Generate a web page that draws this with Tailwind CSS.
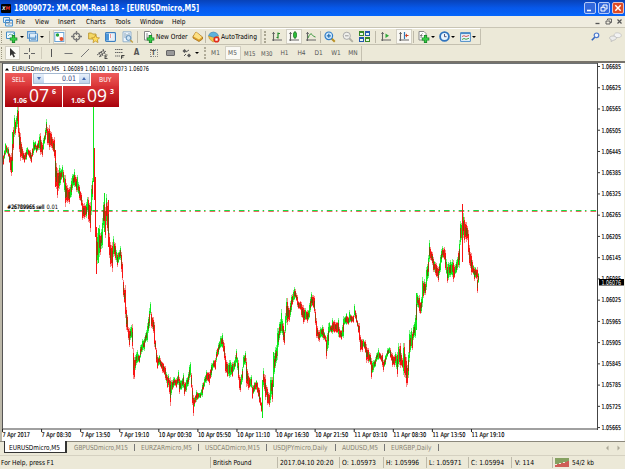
<!DOCTYPE html>
<html lang="en"><head><meta charset="utf-8"><title>EURUSDmicro,M5</title>
<script src="https://cdn.jsdelivr.net/npm/@tailwindcss/browser@4"></script></head>
<body class="w-[625px] h-[469px] overflow-hidden bg-[#ece9d8] font-['DejaVu_Sans_Condensed','DejaVu_Sans',sans-serif] text-[7px] text-black leading-none whitespace-nowrap">
<div class="relative flex flex-col w-[625px] h-[469px]">
<header class="h-4 shrink-0 flex items-center bg-linear-to-b from-[#0842b8] via-[#0758ea] to-[#0566fb] text-white pr-px">
  <div class="w-[10px] h-[9px] ml-px bg-black rounded-[1px] text-[5px] font-bold italic flex items-center justify-center"><span class="text-[#eee]">X</span><span class="text-[#e33]">M</span></div>
  <h1 class="ml-[3px] text-[9.5px] font-bold" data-w="185">18009072: XM.COM-Real 18 - [EURUSDmicro,M5]</h1>
  <div class="ml-auto flex gap-[2px]">
    <svg class="w-3 h-3" viewBox="0 0 12 12"><rect x=".5" y=".5" width="11" height="11" rx="1.5" fill="#3268dc" stroke="#dce6ff" stroke-width=".8"/><path d="M3 8.5h4" stroke="#fff" stroke-width="1.6"/></svg>
    <svg class="w-3 h-3" viewBox="0 0 12 12"><rect x=".5" y=".5" width="11" height="11" rx="1.5" fill="#3268dc" stroke="#dce6ff" stroke-width=".8"/><path d="M5 5V3h4v4H7.500M3 5.300h4v3.700H3z" stroke="#fff" fill="none"/></svg>
    <svg class="w-3 h-3" viewBox="0 0 12 12"><rect x=".5" y=".5" width="11" height="11" rx="1.500" fill="#dc4a25" stroke="#ffe0d8" stroke-width=".8"/><path d="M3.300 3.300l5.400 5.400M8.700 3.300l-5.400 5.400" stroke="#fff" stroke-width="1.500"/></svg>
  </div>
</header>
<nav class="h-3 shrink-0 flex items-center bg-[#efecdf] border-b border-[#c9c5b5]">
  <svg class="w-[10px] h-[10px] ml-[3px] mr-[3px] shrink-0" viewBox="0 0 10 10"><path d="M.5.5h6v5h-6zM2.500 3h7v6h-7z" fill="#dff0fc" stroke="#4d94cf"/><path d="M3 3.300h6" stroke="#3d84d0"/><path d="M4 7V5.500M6 8V5M8 7V5" stroke="#777" stroke-width=".8"/></svg>
  <div class="w-[19px]"><span data-w="9">File</span></div><div class="w-[23px]"><span data-w="14">View</span></div><div class="w-[28px]"><span data-w="17.500">Insert</span></div><div class="w-[29px]"><span data-w="19.500">Charts</span></div><div class="w-[25px]"><span data-w="15.500">Tools</span></div><div class="w-[32px]"><span data-w="23.500">Window</span></div><div><span data-w="13.500">Help</span></div>
  <div class="ml-auto mr-[2px] flex gap-[4px] text-[#555]">
    <svg class="w-[7px] h-[7px]" viewBox="0 0 7 7"><path d="M1.500 5.500h4" stroke="#555" stroke-width="1.300"/></svg>
    <svg class="w-[7px] h-[7px]" viewBox="0 0 7 7"><path d="M2.500 2V1h4v3.500H5M1 3h4v3H1z" stroke="#555" fill="none" stroke-width=".9"/></svg>
    <svg class="w-[7px] h-[7px]" viewBox="0 0 7 7"><path d="M1.500 1.500l4 4M5.500 1.500l-4 4" stroke="#555" stroke-width="1.200"/></svg>
  </div>
</nav>
<section class="h-[17px] shrink-0 flex items-center">
  <div class="w-[481px] h-[17px] flex items-center border-b border-r border-[#c4c0b0] border-t border-t-white pl-px *:shrink-0">
    <i class="w-[3px] h-3 border-l border-dotted border-[#999580]"></i>
    <div class="w-[15px]"><svg class="ml-[2px] w-3 h-3" viewBox="0 0 12 12"><path d="M.5 1h8v6.500h-8z" fill="#eef7ff" stroke="#428bc6"/><path d="M2 5l2-2 2 1 2-2" fill="none" stroke="#5a9" stroke-width=".8"/><path d="M7.500 4v8M3.800 8h7.500" stroke="#168225" stroke-width="3.200"/><path d="M7.500 4.700v6.600M4.500 8h6" stroke="#35c946" stroke-width="1.800"/></svg></div>
    <div class="w-[8px]"><svg class="w-[4px] h-[2px] ml-px" viewBox="0 0 4 2"><path d="M0 0h4L2 2z"/></svg></div>
    <div class="w-[12px]"><svg class="w-[11px] h-[11px]" viewBox="0 0 11 11"><path d="M.6.6h8v6.500h-8zM2.500 3h8v7h-8z" fill="#d6eafa" stroke="#5591c9" stroke-width="1.100"/><path d="M3 3.800h7" stroke="#fff"/><path d="M4 8.500h5" stroke="#80a9cc"/></svg></div>
    <div class="w-[10px]"><svg class="w-[4px] h-[2px] ml-px" viewBox="0 0 4 2"><path d="M0 0h4L2 2z"/></svg></div>
    <i class="w-px h-3 bg-[#bdb9a9]"></i>
    <div class="w-[18px] flex justify-center"><div class="w-[13px] h-[14px] bg-[#f8f7f1] border border-[#d2cfc2]"><svg class="w-[11px] h-3" viewBox="0 0 11 12"><rect x=".8" y="1.500" width="9" height="9" fill="#fff" stroke="#6aa4d6"/><circle cx="3.500" cy="4" r="1.700" fill="#26a53b"/><path d="M5 5.500l2 2" stroke="#bbb"/><circle cx="7.500" cy="8" r="2" fill="#e4512d"/></svg></div></div>
    <div class="w-[17px] flex justify-center"><svg class="w-[11px] h-[11px]" viewBox="0 0 11 11"><circle cx="5.500" cy="5.500" r="3.300" fill="none" stroke="#777" stroke-width="1.200"/><path d="M5.500 0v4M5.500 7v4M0 5.500h4M7 5.500h4" stroke="#777" stroke-width="1.300"/></svg></div>
    <div class="w-[17px] flex justify-center"><svg class="w-3 h-3" viewBox="0 0 12 12"><path d="M.6 2h3l1 1H8v5H.6z" fill="#f4d867" stroke="#b58f26" stroke-width=".8"/><path d="M7.500 4l1.200 2.600 2.800.3-2.100 1.900.6 2.800-2.500-1.500L5 11.600l.6-2.800-2-1.900 2.700-.3z" fill="#ffdf5c" stroke="#bb8b1c" stroke-width=".7"/></svg></div>
    <div class="w-[17px] flex justify-center"><svg class="w-[11px] h-[10px]" viewBox="0 0 11 10"><rect x=".6" y=".6" width="9.800" height="8.800" rx=".8" fill="#fff" stroke="#3c7fc0" stroke-width="1.200"/><path d="M1 1.500h3v7H1z" fill="#4c97d9"/><path d="M5 3h1M5 5h1" stroke="#d33"/><path d="M6.500 3h3M6.500 5h3M5 7h4" stroke="#bcd" stroke-width=".7"/></svg></div>
    <div class="w-[18px] flex justify-center"><svg class="w-3 h-3" viewBox="0 0 12 12"><path d="M1 .8h8v10H1z" fill="#edf5fb" stroke="#8bacc9" stroke-width=".9"/><path d="M3 2v5M5 3v4M7 2v4" stroke="#718fa9" stroke-width=".8"/><circle cx="6.500" cy="7" r="2.400" fill="#cfe4f5" stroke="#5c8db9"/><path d="M8.300 9l2.500 2.500" stroke="#c3a145" stroke-width="1.500"/></svg></div>
    <i class="w-px h-3 bg-[#bdb9a9]"></i>
    <div class="w-[17px] flex justify-end"><svg class="w-3 h-3" viewBox="0 0 12 12"><path d="M1.500.5h5l2 2v6.500h-7z" fill="#fff" stroke="#888"/><path d="M3 3h2M3 5h4M3 7h3" stroke="#777" stroke-width=".8"/><path d="M7.500 4v8M3.800 8h7.500" stroke="#168225" stroke-width="3.200"/><path d="M7.500 4.700v6.600M4.500 8h6" stroke="#35c946" stroke-width="1.800"/></svg></div>
    <div class="w-[37px] -mt-px pl-px"><span data-w="31.500">New Order</span></div>
    <div class="w-[13px]"><svg class="w-[11px] h-[11px]" viewBox="0 0 11 11"><path d="M4 1l6.500 5v2L7 10.500 1 7V5.500z" fill="#dca12d" stroke="#a66d16" stroke-width=".8"/><path d="M4 1l6 5-3 2.500L1.500 5.500z" fill="#fde083"/></svg></div>
    <i class="w-[2px] h-3 border-l border-[#bdb9a9]"></i>
    <div class="w-[14px]"><svg class="w-[12px] h-[12px] ml-px" viewBox="0 0 12 12"><path d="M.5 5h10l-1.500 4.500L5 11 1.500 8z" fill="#f2c546" stroke="#b78929" stroke-width=".6"/><path d="M.5 4.500Q2 .8 5.500 1t5 3.500L6 6.500z" fill="#5bb2dc" stroke="#4385af" stroke-width=".6"/><circle cx="8.500" cy="8.500" r="3.100" fill="#df2c1c"/><rect x="7.300" y="7.300" width="2.400" height="2.400" fill="#fff"/></svg></div>
    <div class="w-[38px] -mt-px"><span data-w="36">AutoTrading</span></div>
    <i class="w-[2px] h-[15px] ml-px bg-[#d2cfbf]"></i><i class="w-[4px] h-3 ml-[2px] border-l-2 border-dotted border-[#aaa692]"></i>
    <div class="w-[17px] flex justify-center"><svg class="w-[10px] h-[11px]" viewBox="0 0 10 11"><path d="M1.500 1v9M0 9h10M.3 2.500h2.500" stroke="#666" stroke-width="1.100"/><path d="M6 1.500v6M6 2.500h2M4.500 6.500H6" stroke="#258b2d" stroke-width="1.200"/></svg></div>
    <div class="w-[17px] flex justify-center"><div class="w-4 h-[15px] bg-[#faf9f4] border border-[#d2cfc2] flex items-center justify-center"><svg class="w-[10px] h-[11px]" viewBox="0 0 10 11"><path d="M1.500 1v9M0 9h10M.3 2.500h2.500" stroke="#666" stroke-width="1.100"/><path d="M6 0v8" stroke="#177620"/><rect x="4.500" y="1.500" width="3" height="5" rx=".8" fill="#28bd38" stroke="#177620" stroke-width=".7"/></svg></div></div>
    <div class="w-[17px] flex justify-center"><svg class="w-[10px] h-[11px]" viewBox="0 0 10 11"><path d="M1.500 1v9M0 9h10M.3 2.500h2.500" stroke="#666" stroke-width="1.100"/><path d="M2 7Q4.500 1 6 3.500T9.500 6" fill="none" stroke="#38953b"/></svg></div>
    <i class="w-px h-3 ml-px bg-[#bdb9a9]"></i>
    <div class="w-[18px] flex justify-center"><svg class="w-3 h-3" viewBox="0 0 12 12"><path d="M7 7l3.800 3.800" stroke="#ba9126" stroke-width="2"/><circle cx="4.800" cy="4.800" r="3.800" fill="#cfeaff" stroke="#327ec8" stroke-width="1.200"/><path d="M2.800 4.800h4M4.800 2.800v4" stroke="#256faf" stroke-width="1.200"/></svg></div>
    <div class="w-[17px] flex justify-center"><svg class="w-3 h-3" viewBox="0 0 12 12"><path d="M7 7l3.800 3.800" stroke="#b1afa3" stroke-width="1.800"/><circle cx="4.800" cy="4.800" r="3.600" fill="#f0f0ec" stroke="#aaa"/><path d="M3 4.800h3.600" stroke="#999"/></svg></div>
    <div class="w-[17px] flex justify-center"><svg class="w-[11px] h-[11px]" viewBox="0 0 11 11"><path d="M0 0h5v5H0zM6 6h5v5H6z" fill="#378827"/><path d="M6 0h5v5H6zM0 6h5v5H0z" fill="#2358ad"/><path d="M1 2h3v2H1zM7 2h3v2H7zM1 8h3v2H1zM7 8h3v2H7z" fill="#e9f7ec"/></svg></div>
    <i class="w-px h-3 ml-[2px] mr-px bg-[#bdb9a9]"></i>
    <div class="w-[18px] flex justify-center"><svg class="w-[10px] h-[11px]" viewBox="0 0 10 11"><path d="M1.500 1v9M0 9h10M.3 2.500h2.500" stroke="#666" stroke-width="1.100"/><path d="M4.500 2.500l3.500 2.300-3.500 2.300z" fill="#2fa83a"/></svg></div>
    <div class="w-[17px] flex justify-center"><div class="w-4 h-[15px] bg-[#faf9f4] border border-[#d2cfc2] flex items-center justify-center"><svg class="w-[10px] h-[11px]" viewBox="0 0 10 11"><path d="M1.500 1v9M0 9h10M.3 2.500h2.500" stroke="#666" stroke-width="1.100"/><path d="M5.500 1v7" stroke="#3278b5" stroke-width="1.200"/><path d="M9.500 4.500H7" stroke="#cf4020"/><path d="M6 4.500l2-2v4z" fill="#cf4020"/></svg></div></div>
    <i class="w-px h-3 ml-px mr-px bg-[#bdb9a9]"></i>
    <div class="w-[16px]"><svg class="w-3 h-3 ml-[3px]" viewBox="0 0 12 12"><path d="M1 .5h5l2 2v6.500H1z" fill="#fff" stroke="#888"/><path d="M4.500 2.500Q3 2.500 3 7M2 4.500h2.500" fill="none" stroke="#666" stroke-width=".8"/><path d="M7.500 4v8M3.800 8h7.500" stroke="#168225" stroke-width="3.200"/><path d="M7.500 4.700v6.600M4.500 8h6" stroke="#35c946" stroke-width="1.800"/></svg></div>
    <div class="w-[8px]"><svg class="w-[4px] h-[2px]" viewBox="0 0 4 2"><path d="M0 0h4L2 2z"/></svg></div>
    <div class="w-[12px]"><svg class="w-[11px] h-[11px]" viewBox="0 0 11 11"><circle cx="5.500" cy="5.500" r="4.400" fill="#e9f5ff" stroke="#2f73bd" stroke-width="1.800"/><path d="M5.500 3v2.700h2" fill="none" stroke="#446" stroke-width=".9"/></svg></div>
    <div class="w-[9px]"><svg class="w-[4px] h-[2px]" viewBox="0 0 4 2"><path d="M0 0h4L2 2z"/></svg></div>
    <div class="w-[12px]"><svg class="w-[11px] h-[10px]" viewBox="0 0 11 10"><path d="M.6.6h9.800v8.800H.6z" fill="#edf6fd" stroke="#4b8bc6"/><path d="M1 1.400h9" stroke="#4b8bc6" stroke-width="1.400"/><path d="M2 4.500l2-.8 2 .8 3-1" fill="none" stroke="#c44" stroke-width=".9"/><path d="M2 7.500l2-1 2 .8 3-1" fill="none" stroke="#393" stroke-width=".9"/></svg></div>
    <svg class="w-[4px] h-[2px]" viewBox="0 0 4 2"><path d="M0 0h4L2 2z"/></svg>
  </div>
  <svg class="w-[9px] h-[9px] ml-auto shrink-0" viewBox="0 0 9 9"><path d="M4 5L.8 8.200" stroke="#3264bd" stroke-width="1.600"/><circle cx="5.500" cy="3.300" r="2.300" fill="#f2f8ff" stroke="#4b78cb" stroke-width="1.200"/></svg>
  <svg class="w-[13px] h-[10px] ml-[9px] mr-[3px] shrink-0" viewBox="0 0 13 10"><path d="M8 .8c6 0 5 5 1.500 4.700H7C4 5 4.500.8 8 .8z" fill="#f3f3f3" stroke="#bbb" stroke-width=".7"/><path d="M4 4C8.500 4 8 8 5 8l-3 1.500.3-1.800C-.3 7 0 4 4 4z" fill="#ececec" stroke="#b3b3b3" stroke-width=".7"/></svg>
</section>
<section class="h-4 shrink-0 flex items-center text-[6.500px] text-[#555]">
  <div class="w-[362px] flex items-center border-r border-[#c4c0b0] h-[15px] *:shrink-0">
    <i class="w-[3px] ml-px mr-px h-3 border-l border-dotted border-[#999580]"></i>
    <div class="w-[15px] h-[14px] bg-[#faf9f4] border border-[#d2cfc2] flex items-center justify-center"><svg class="w-[7px] h-[10px]" viewBox="0 0 7 10"><path d="M1 0v8l2-1.800L4.500 9.500 6 8.800 4.500 5.800H7z" fill="#333"/></svg></div>
    <div class="w-[18px] flex justify-center"><svg class="w-[11px] h-[11px]" viewBox="0 0 11 11"><path d="M5.500 0v4M5.500 7v4M0 5.500h4M7 5.500h4" stroke="#666"/></svg></div>
    <i class="w-px h-3 ml-[3px] bg-[#d0ccbc]"></i>
    <div class="w-[17px] flex justify-center"><svg class="w-[10px] h-[10px]" viewBox="0 0 10 10"><path d="M5.500 1v8" stroke="#555"/></svg></div>
    <div class="w-[17px] flex justify-center"><svg class="w-[10px] h-[10px]" viewBox="0 0 10 10"><path d="M1.500 5.500h8" stroke="#777"/></svg></div>
    <div class="w-[18px] flex justify-center"><svg class="w-[10px] h-[10px]" viewBox="0 0 10 10"><path d="M1 9l8-8" stroke="#777"/></svg></div>
    <div class="w-[17px] flex justify-center"><svg class="w-[11px] h-[11px]" viewBox="0 0 11 11"><path d="M0 7l7-5M2 9l7-6M2 4l2 5M4 3l2 5M6 1l2 5" stroke="#555" stroke-width=".9"/><path d="M8 7h2.500M8 8.800h2M8 10.500h2.500M8 7v4" stroke="#333" stroke-width=".8"/></svg></div>
    <div class="w-[17px] flex justify-center"><svg class="w-[10px] h-[11px]" viewBox="0 0 10 11"><path d="M0 1.500h8M0 4.500h8M0 8h5" stroke="#666" stroke-dasharray="1.500 .5"/><path d="M6.500 10.800V7.500h3M6.500 9h2" fill="none" stroke="#333" stroke-width=".9"/></svg></div>
    <div class="w-[17px] text-center text-[8px] font-bold">A</div>
    <div class="w-[17px] flex justify-center"><div class="w-[8px] h-[8px] border border-dotted border-[#888] text-[7px] leading-[7px] font-bold text-center">T</div></div>
    <div class="w-[17px] flex justify-center"><div class="w-[9px] h-[6px] bg-[#999] border border-[#666] rounded-[1px]"></div></div>
    <div class="w-[16px] flex justify-center"><svg class="w-[10px] h-[10px]" viewBox="0 0 10 10"><path d="M.5 3l2-2 2 2-2 2zM5 7.500l2-2 2 2-2 2z" fill="#555"/><path d="M4 4l3-2M2 8l2-2" stroke="#555"/></svg></div>
    <svg class="w-[4px] h-[2px]" viewBox="0 0 4 2"><path d="M0 0h4L2 2z"/></svg>
    <i class="w-[2px] h-3 ml-[5px] border-l-2 border-dotted border-[#b0ac99]"></i>
    <div class="w-[17px] ml-px text-center">M1</div><div class="w-[17px] flex justify-center"><div class="w-4 h-[14px] bg-[#faf9f4] border border-[#d2cfc2] text-center leading-[13px]">M5</div></div>
    <div class="w-[17px] flex justify-center"><span data-w="11.500">M15</span></div><div class="w-[18px] flex justify-center"><span data-w="11.500">M30</span></div><div class="w-[17px] text-center">H1</div><div class="w-[17px] text-center">H4</div><div class="w-[17px] text-center">D1</div><div class="w-[18px] text-center">W1</div><div class="w-[16px] text-center">MN</div>
  </div>
</section>
<main class="h-[380px] shrink-0 bg-white"><svg id="chart" class="block w-[625px] h-[380px]" viewBox="0 61 625 380" font-size="6.600">
  <g shape-rendering="crispEdges"><path d="M0 61h625v2H0z" fill="#77736b"/><path d="M0 63h2v378H0z" fill="#bdb9aa"/><path d="M2 63h1v367H2z" fill="#555"/><path d="M3 63h595v1H3z" fill="#6e7275"/><path d="M597 63h1v367h-1z" fill="#444"/><path d="M3 428h594v2H3z" fill="#a0a0a0"/><path d="M624 63h1v378h-1z" fill="#f0eedf"/></g>
  <path d="M3 210.500h594" stroke="#19dc46" stroke-dasharray="5.600 3.500 1.500 4.050" stroke-dashoffset="-1.500"/><path d="M3 211.500h594" stroke="#e43b32" stroke-opacity=".75" stroke-dasharray="5.600 3.500 1.500 4.050" stroke-dashoffset="-1.500"/>
  <g id="bars" shape-rendering="crispEdges"></g>
  <text x="7" y="209" textLength="37" lengthAdjust="spacingAndGlyphs" font-size="6">#26789965 sell</text><text x="7.500" y="209.300" textLength="37" lengthAdjust="spacingAndGlyphs" font-size="6">#26709966 sell</text><text x="46.500" y="209" textLength="11.500" lengthAdjust="spacingAndGlyphs" font-size="6">0.01</text>
  <path d="M5 70.500h4L7 68z"/><text x="12" y="71" textLength="47.500" lengthAdjust="spacingAndGlyphs">EURUSDmicro,M5</text><text x="63" y="71" textLength="86" lengthAdjust="spacingAndGlyphs">1.06089 1.06100 1.06073 1.06076</text>
  <g id="axis" stroke-width=".15"></g>
</svg></main>
<section class="h-[14px] shrink-0 flex items-start bg-[#ece9d8] border-t border-[#8b887c] text-[#858171] text-[7px]">
  <div class="w-[63px] h-[12px] ml-[4px] -mt-px bg-white border border-t-0 border-[#333] border-r-2 text-black pl-[4px] pt-[3px] shrink-0"><span data-w="51">EURUSDmicro,M5</span></div>
  <div class="flex h-[11px] items-center *:shrink-0">
  <div class="w-[68px] pl-[7px] border-r border-[#777]"><span data-w="54">GBPUSDmicro,M15</span></div>
  <div class="w-[64px] pl-[6px] border-r border-[#777]"><span data-w="51">EURZARmicro,M5</span></div>
  <div class="w-[68px] pl-[6px] border-r border-[#777]"><span data-w="55">USDCADmicro,M15</span></div>
  <div class="w-[69px] pl-[6px] border-r border-[#777]"><span data-w="54.500">USDJPYmicro,Daily</span></div>
  <div class="w-[49px] pl-[6px] border-r border-[#777]"><span data-w="36">AUDUSD,M5</span></div>
  <div class="w-[54px] pl-[6px] border-r border-[#777]"><span data-w="40.500">EURGBP,Daily</span></div></div>
  <svg class="w-[16px] h-[6px] ml-auto mr-[4px] mt-[3px]" viewBox="0 0 16 6"><path d="M3.500 .5v5L1 3zM12.500 .5v5L15 3z" fill="#aaa796"/></svg>
</section>
<footer class="h-[14px] shrink-0 flex items-center border-t border-[#d5d1c1] pb-px *:shrink-0">
  <div class="w-[210px] pl-px"><span data-w="53">For Help, press F1</span></div>
  <div class="w-[67px] h-[11px] flex items-center pl-[2px] border-l border-[#bdb9a9]"><span data-w="38.500">British Pound</span></div>
  <div class="w-[62px] h-[11px] flex items-center pl-[2px] border-l border-[#bdb9a9]"><span data-w="53.500">2017.04.10 20:20</span></div>
  <div class="w-[44px] h-[11px] flex items-center pl-[2px] border-l border-[#bdb9a9]"><span data-w="34">O: 1.05973</span></div>
  <div class="w-[43px] h-[11px] flex items-center pl-[2px] border-l border-[#bdb9a9]"><span data-w="33">H: 1.05996</span></div>
  <div class="w-[42px] h-[11px] flex items-center pl-[2px] border-l border-[#bdb9a9]"><span data-w="32.500">L: 1.05971</span></div>
  <div class="w-[43px] h-[11px] flex items-center pl-[2px] border-l border-[#bdb9a9]"><span data-w="33">C: 1.05994</span></div>
  <div class="w-[41px] h-[11px] flex items-center pl-[3px] border-l border-[#bdb9a9]"><span data-w="19">V: 114</span></div>
  <div class="flex h-[11px] items-center pl-[2px] border-l border-[#bdb9a9]"><svg class="w-[15px] h-[9px] mr-[2px]" viewBox="0 0 15 9"><path d="M1 0v6M3 0v6M5 0v5M7 0v5M9 0v4M11 0v4M13 0v3" stroke="#63883a" stroke-width="1.500"/><path d="M1 9V7M3 9V6M5 9V6M7 9V5M9 9V5M11 9V4M13 9V3" stroke="#c4302c" stroke-width="1.500"/></svg><span data-w="22">54/2 kb</span></div>
</footer>
<aside class="absolute left-[5px] top-[73px] w-[114px] h-[34px] text-white">
  <div class="flex justify-between h-[13px] bg-white">
    <div class="w-[27px] bg-linear-to-b from-[#ee5b5b] to-[#da3638] flex justify-center pt-[3px]"><span data-w="13">SELL</span></div>
    <div class="w-[57px] h-[11px] flex border border-[#a6bad2] text-[7.500px]"><b class="w-[10px] bg-linear-to-b from-[#e8f1fb] to-[#bfd3eb] flex items-center justify-center"><svg class="w-[4px] h-[3px]" viewBox="0 0 4 3"><path d="M0 0h4L2 3z" fill="#426ab0"/></svg></b><span class="flex-1 flex justify-end pr-[3px] pt-px text-[#304080]"><span data-w="14">0.01</span></span><b class="w-[10px] bg-linear-to-b from-[#e8f1fb] to-[#bfd3eb] flex items-center justify-center"><svg class="w-[4px] h-[3px]" viewBox="0 0 4 3"><path d="M0 3h4L2 0z" fill="#426ab0"/></svg></b></div>
    <div class="w-[28px] bg-linear-to-b from-[#ee5b5b] to-[#da3638] flex justify-center pt-[3px]"><span data-w="12.500">BUY</span></div>
  </div>
  <div class="flex justify-between h-[21px] bg-white font-['Open_Sans',sans-serif]">
    <div class="w-[57px] h-[21px] bg-linear-to-b from-[#d93236] to-[#a9000b] flex"><b class="w-[24px] pl-[8px] pt-[11px] text-[7px]"><span data-w="14">1.06</span></b><span class="w-[23px] text-[19px]"><span data-w="20">07</span></span><b class="text-[7px] pt-[2px]">6</b></div>
    <div class="w-[56px] h-[21px] bg-linear-to-b from-[#d93236] to-[#a9000b] flex"><b class="w-[24px] pl-[8px] pt-[11px] text-[7px]"><span data-w="14">1.06</span></b><span class="w-[23px] text-[19px]"><span data-w="20">09</span></span><b class="text-[7px] pt-[2px]">3</b></div>
  </div>
</aside>
</div>
<script>
// Price bars: x,high,low triplets in thirds of a pixel, relative to each origin.
const groups=[
[0,300,"10,165,195 16,128,165 20,135,160 25,142,172 30,165,215 34,160,228 38,95,215 43,45,110 47,60,105 51,22,80 54,22,110 58,85,155 62,98,182 67,140,180 72,160,188 78,145,180 83,140,165 90,150,182 95,160,188 100,120,165 105,122,150 110,135,160 117,103,150 122,100,165 126,130,170 130,115,150 135,85,120 139,58,105 143,80,135 148,75,150 153,95,145 158,110,150 162,112,175 166,150,262 172,205,295 177,195,268 182,205,255 186,195,235 191,210,250 196,225,320 202,255,310 208,260,312 213,235,290 218,222,270 223,208,260 228,230,275 233,225,275 238,255,300 243,280,318 248,300,360 253,310,358 258,305,355 262,290,335 266,290,365 270,305,395 275,255,345 278,235,300 281,22,245 284,145,300 287,230,410 290,380,523 294,385,490 298,375,470 302,400,465 306,355,445 310,305,385 313,278,395 316,320,415 320,282,375 324,300,440 328,400,475 332,425,500 336,425,515 341,408,470 346,430,480 351,460,500 356,455,490 361,438,480 365,455,515 368,485,540"],
[330,840,"40,0,50 43,25,70 46,15,115 49,80,150 52,105,155 55,140,180 58,145,200 61,140,180 64,135,175 67,132,208 70,205,297 73,230,298 76,225,270 79,215,255 82,210,250 87,225,248 92,195,235 97,178,215 102,170,212 107,160,190 111,130,185 115,110,160 118,85,145 121,65,105 125,95,145 130,112,160 134,125,200 137,180,210 140,205,250 143,225,268 147,225,255 151,235,262 156,245,278 161,248,280 166,258,300 171,285,325 176,282,320 181,290,377 185,300,345 189,292,325 194,290,318 199,295,325 204,270,315 209,290,342 214,300,330 219,278,325 224,305,347 229,295,335 234,275,318 238,255,300 241,245,290 244,280,325 247,315,375 250,345,408 254,350,380 258,330,365 263,335,360 270,335,355 276,310,350 282,292,320 288,270,308 294,275,305 299,275,315 303,248,290 309,240,265 315,235,270 320,210,245 326,190,225 332,168,205 337,160,205 342,190,240 347,220,280 352,245,292 357,240,294 362,240,292 367,245,292 372,240,270 376,225,262 380,207,250 384,240,300 388,285,330 392,290,335 396,260,305 401,225,265 406,212,255 410,235,320 414,280,330 418,290,325 423,285,325 428,315,358 433,305,335 438,300,330 443,305,340 448,325,370 453,365,395 457,300,413 461,265,320 465,285,360 469,315,350 473,320,375 477,340,380 481,290,370 485,290,350 488,290,367 491,215,320 495,200,265 499,195,250 503,145,240 507,125,180 511,118,165 515,88,160 519,130,185 524,150,195 527,100,160 530,55,130"],
[780,810,"83,85,165 87,115,155 91,92,140 95,75,125 99,60,95 103,52,90 107,58,85 111,75,110 115,92,118 120,93,120 125,95,140 129,105,162 133,115,155 137,115,150 141,120,158 145,120,150 149,98,145 152,80,125 155,67,112 159,75,115 163,78,130 167,118,165 170,145,205 174,180,212 178,180,215 182,172,205 187,165,205 191,170,210 196,195,215 200,200,267 204,160,235 208,155,190 213,165,190 218,143,192 223,150,190 228,155,190 234,143,200 239,172,205 244,180,210 249,138,205 254,140,165 259,128,165 264,140,165 269,120,160 274,135,158 279,135,160 284,102,140 288,130,160 293,150,172 298,160,215 302,195,245 306,208,245 311,207,232 316,210,250 320,222,278 325,235,278 330,250,285 335,265,327 340,270,305 345,262,290 350,250,275 356,234,270 361,250,270 366,250,290 371,270,305 377,255,285 382,235,262 387,230,250 392,235,265 397,250,290 402,255,290 407,245,285 412,245,320 416,220,290 421,218,295 426,265,295 431,220,315 434,218,320 438,260,350 442,285,345 446,245,325 449,180,275 453,175,235 457,185,240 461,165,210 465,135,205 469,68,180 473,70,110 477,75,130"],
[1140,570,"122,335,372 125,320,368 128,260,350 132,268,315 136,275,315 140,230,300 144,195,265 148,150,215 152,170,210 156,185,225 160,200,245 165,215,255 170,218,262 175,230,275 180,195,245 184,178,220 188,168,205 192,172,210 197,180,240 202,222,280 206,215,270 211,210,262 216,208,262 219,210,275 224,225,265 229,210,250 233,200,240 237,150,235 241,92,165 245,98,150 248,42,215 251,70,145 254,80,158 258,95,155 262,108,150 265,120,195 269,165,225 273,190,255 277,210,250 282,230,272 287,230,265 291,232,280 293,262,308 296,248,280"]];
const pts=[];
for(const [ox,oy,s] of groups)for(const t of s.split(" ")){const [x,h,l]=t.split(",").map(Number);pts.push([Math.floor((x+ox)/3),(h+oy)/3,(l+oy)/3]);}
let out="",prev=pts[0];
const rect=(x,a,b,f)=>{out+=`<rect x="${x}" y="${a.toFixed(1)}" width="1" height="${Math.max(1,b-a).toFixed(1)}" fill="${f}"/>`};
const bar=(x,h,l,up,k)=>{
  const n=l-h,c=up?"#0de81c":"#fa1414",soft=up?"#7df58a":"#f98c8c";
  rect(x,h,l,n>34?c:soft);
  rect(x,h+n*.14,l-n*.12,c);
  if(k%3!==1&&n<50)rect(x,h+n*.3,h+n*.72,k%2?"#6b5a08":"#a83a08");
};
pts.forEach((p,i)=>{
  const up=(p[1]+p[2])<(prev[1]+prev[2]),gap=p[0]-prev[0];
  for(let g=1;g<gap;g++){
    const f=g/gap,h=prev[1]+(p[1]-prev[1])*f,l=prev[2]+(p[2]-prev[2])*f,m=(l-h)*.12;
    bar(prev[0]+g,h+m,l-m,(i+g)%4?up:!up,i+g);
  }
  bar(p[0],p[1],p[2],p[0]===93||up,i);prev=p;
});
document.getElementById("bars").innerHTML=out;
let ax="";
for(let i=0;i<18;i++){const y=66.500+i*21.240;ax+=`<path d="M598 ${y}h2" stroke="#333" stroke-width="1"/><text x="601.500" y="${y+2.300}" stroke="#000" textLength="19.500" lengthAdjust="spacingAndGlyphs">${(1.06685-i*.0006).toFixed(5)}</text>`}
ax+='<path d="M599 279h25v6.500h-25z"/><text x="601.500" y="284.600" fill="#fff" textLength="19.500" lengthAdjust="spacingAndGlyphs">1.06076</text>';
["7 Apr 2017","7 Apr 08:30","7 Apr 13:50","7 Apr 19:10","10 Apr 00:30","10 Apr 05:50","10 Apr 11:10","10 Apr 16:30","10 Apr 21:50","11 Apr 03:10","11 Apr 08:30","11 Apr 13:50","11 Apr 19:10"].forEach((t,i)=>{const x=2.500+i*39.080;ax+=`<path d="M${x} 429v3" stroke="#222" stroke-width="1"/><text x="${x}" y="437.300" stroke="#000" textLength="${i?(i<4?29.500:33):27.500}" lengthAdjust="spacingAndGlyphs">${t}</text>`});
document.getElementById("axis").innerHTML=ax;
document.querySelectorAll("[data-w]").forEach(e=>{const w=+e.dataset.w,t=e.textContent;e.innerHTML=`<svg width="${w}" style="height:1em;overflow:visible"><text x="0" y=".86em" fill="currentColor" textLength="${w}" lengthAdjust="spacingAndGlyphs">${t}</text></svg>`});
</script>
</body></html>
